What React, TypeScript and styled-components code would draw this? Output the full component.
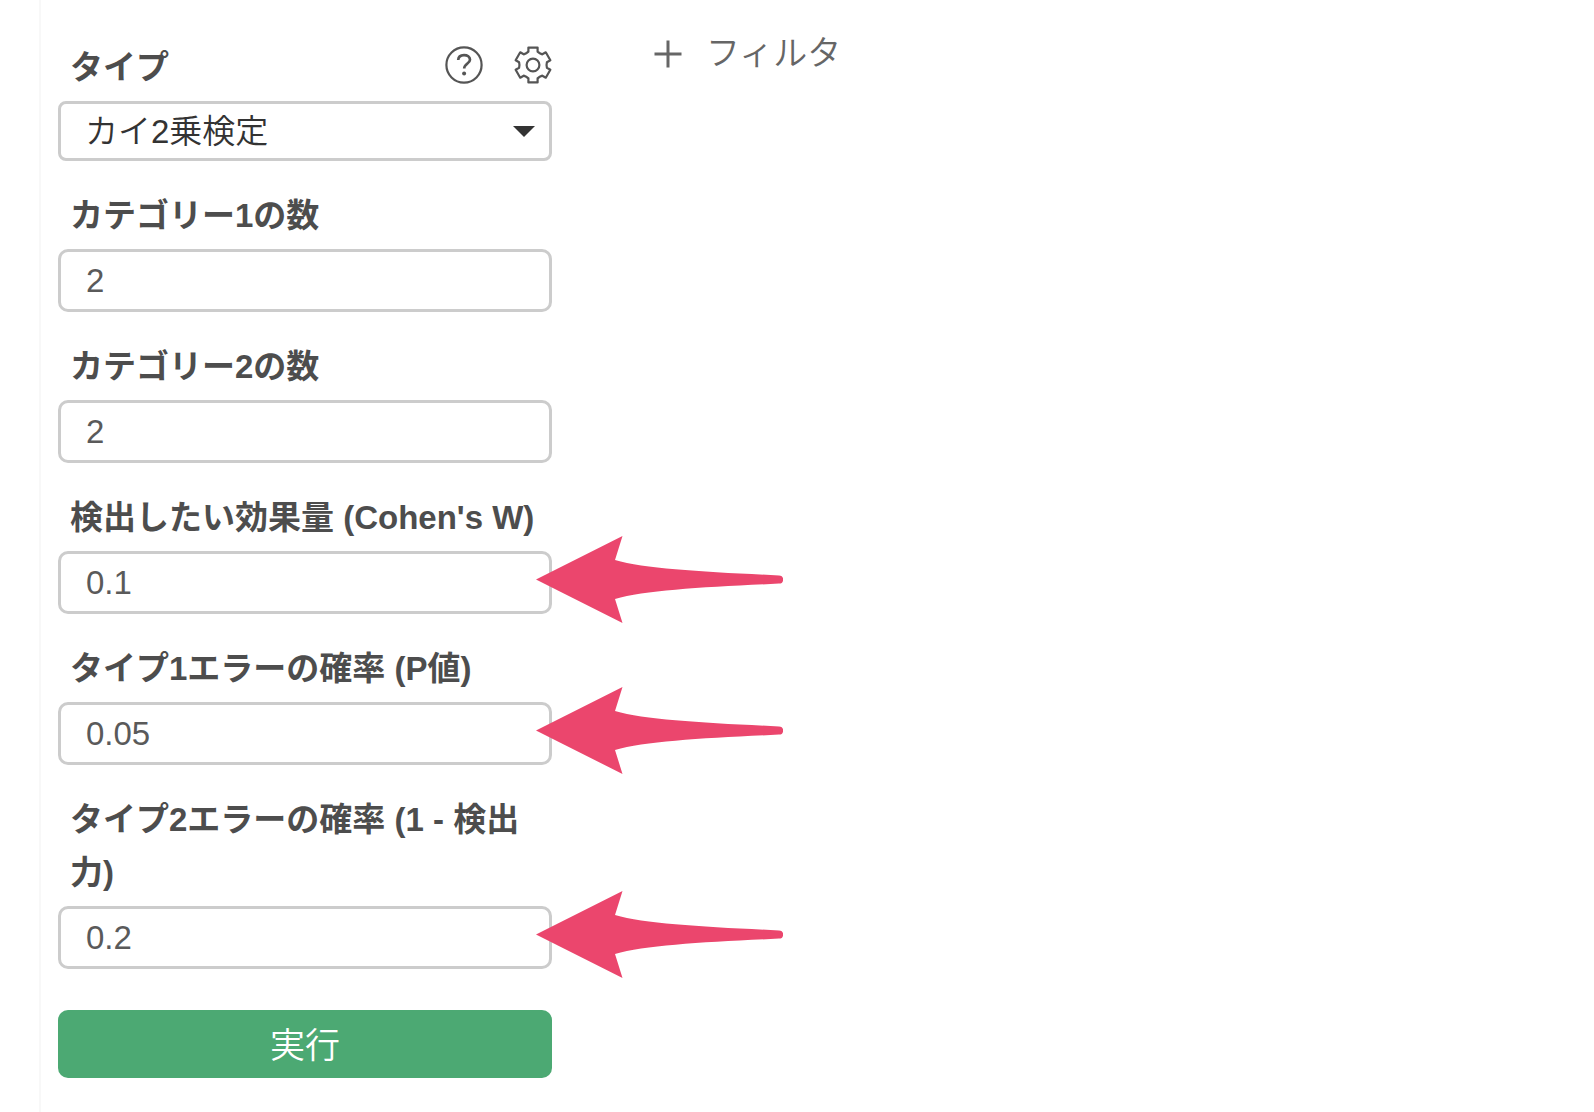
import React, { useState } from "react";
import styled, { createGlobalStyle } from "styled-components";

const GlobalStyle = createGlobalStyle`
  *, *::before, *::after { box-sizing: border-box; }
  body {
    margin: 0;
    background: #ffffff;
    color: #4d4d4d;
    font-family: "Liberation Sans", "Noto Sans CJK JP", sans-serif;
    font-size: 33px;
  }
  button, input, select { font: inherit; }
`;

const Page = styled.div`
  display: flex;
  min-height: 100vh;
  padding-left: 39px;
`;

const Sidebar = styled.aside`
  flex: 0 0 auto;
  width: 530px;
  padding: 41px 17px 32px;
  border-left: 2px solid #f8f8f8;
`;

const Content = styled.main`
  flex: 1;
  min-width: 0;
  padding: 28px 32px 28px 85px;
`;

const Form = styled.form`
  display: flex;
  flex-direction: column;
  gap: 28px;
`;

const Field = styled.div`
  display: flex;
  flex-direction: column;
  gap: 7px;
`;

const FieldHeader = styled.div`
  display: flex;
  align-items: center;
  justify-content: space-between;
`;

const Label = styled.label`
  padding: 0 12px;
  font-weight: 700;
  line-height: 53px;
`;

const Tools = styled.div`
  display: flex;
  gap: 31px;
  padding-bottom: 6px;
`;

const IconButton = styled.button`
  display: flex;
  padding: 0;
  border: 0;
  background: none;
  color: #555555;
  cursor: pointer;
`;

const Control = styled.div`
  position: relative;
`;

const Select = styled.select`
  display: block;
  width: 100%;
  height: 60px;
  padding: 0 48px 0 24px;
  border: 3px solid #cccccc;
  border-radius: 8px;
  background: #ffffff;
  color: #333333;
  font-weight: 350;
  appearance: none;
`;

const Caret = styled.svg`
  position: absolute;
  top: 25px;
  right: 17px;
  pointer-events: none;
`;

const Input = styled.input`
  display: block;
  width: 100%;
  height: 63px;
  padding: 0 25px;
  border: 3px solid #cccccc;
  border-radius: 10px;
  background: #ffffff;
  color: #5a5a5a;
`;

const Pointer = styled.svg`
  position: absolute;
  top: -15px;
  left: calc(100% - 16px);
  pointer-events: none;
`;

const RunButton = styled.button`
  height: 68px;
  margin-top: 13px;
  padding: 0 0 4px;
  border: 0;
  border-radius: 10px;
  background: #4ca973;
  color: #ffffff;
  font-size: 35px;
  font-weight: 350;
  cursor: pointer;
`;

const FilterButton = styled.button`
  display: flex;
  align-items: center;
  gap: 24px;
  padding: 0;
  border: 0;
  background: none;
  color: #666666;
  font-size: 34px;
  font-weight: 350;
  line-height: 51px;
  cursor: pointer;
`;

function HelpIcon() {
  return (
    <svg width="38" height="38" viewBox="-19 -19 38 38" fill="none" stroke="currentColor" aria-hidden="true">
      <circle r="17.6" strokeWidth="2.2" />
      <path d="M-5.8 -5C-5.6 -8.4 -3.2 -9.9 0 -9.9C3.4 -9.9 6 -8.2 6 -5.2C6 -1.6 0.2 -1.2 0.2 3.6" strokeWidth="2.7" />
      <circle cx="0.1" cy="8.6" r="2" fill="currentColor" stroke="none" />
    </svg>
  );
}

const toothOutline = [[-4.6, -13.4], [-4.6, -17.4], [4.6, -17.4], [4.6, -13.4]];

const rotate = ([x, y]: number[], deg: number) => {
  const a = (deg * Math.PI) / 180;
  const px = x * Math.cos(a) - y * Math.sin(a);
  const py = x * Math.sin(a) + y * Math.cos(a);
  return `${px.toFixed(2)} ${py.toFixed(2)}`;
};

// Each tooth is followed by a shallow curve into the valley before the next one.
const gearPath =
  "M" +
  [0, 60, 120, 180, 240, 300]
    .map((deg) => {
      const tooth = toothOutline.map((point) => rotate(point, deg)).join("L");
      return `${tooth}Q${rotate([6.6, -11.4], deg)} `;
    })
    .map((part, i, parts) => part + parts[(i + 1) % parts.length].split("L")[0])
    .join("L") +
  "Z";

function GearIcon() {
  return (
    <svg width="38" height="38" viewBox="-19 -19 38 38" fill="none" stroke="currentColor" strokeWidth="2.2" strokeLinejoin="round" aria-hidden="true">
      <path d={gearPath} />
      <circle r="6.4" />
    </svg>
  );
}

function PlusIcon() {
  return (
    <svg width="28" height="28" viewBox="0 0 28 28" stroke="currentColor" strokeWidth="3" aria-hidden="true">
      <path d="M0.5 14H27.5M14 0.5V27.5" />
    </svg>
  );
}

function PointerArrow() {
  return (
    <Pointer width="247" height="87" viewBox="0 0 247 87" fill="#eb466d" aria-hidden="true">
      <path d="M0 43.5L86.5 0L79 24C110 33 170 36 243 39.4A4.1 4.1 0 0 1 243 47.6C170 51 110 54 79 63L86.5 87Z" />
    </Pointer>
  );
}

type NumberField = { id: string; label: string; initial: string; marked?: boolean };

const numberFields: NumberField[] = [
  { id: "category1", label: "カテゴリー1の数", initial: "2" },
  { id: "category2", label: "カテゴリー2の数", initial: "2" },
  { id: "effect", label: "検出したい効果量 (Cohen's W)", initial: "0.1", marked: true },
  { id: "alpha", label: "タイプ1エラーの確率 (P値)", initial: "0.05", marked: true },
  { id: "beta", label: "タイプ2エラーの確率 (1 - 検出力)", initial: "0.2", marked: true },
];

function NumberInput({ id, label, initial, marked }: NumberField) {
  const [value, setValue] = useState(initial);
  return (
    <Field>
      <Label htmlFor={id}>{label}</Label>
      <Control>
        <Input id={id} type="text" inputMode="decimal" value={value} onChange={(e) => setValue(e.target.value)} />
        {marked && <PointerArrow />}
      </Control>
    </Field>
  );
}

export default function App() {
  return (
    <Page lang="ja">
      <GlobalStyle />
      <Sidebar>
        <Form onSubmit={(e) => e.preventDefault()}>
          <Field>
            <FieldHeader>
              <Label htmlFor="test-type">タイプ</Label>
              <Tools>
                <IconButton type="button" aria-label="ヘルプ">
                  <HelpIcon />
                </IconButton>
                <IconButton type="button" aria-label="設定">
                  <GearIcon />
                </IconButton>
              </Tools>
            </FieldHeader>
            <Control>
              <Select id="test-type" defaultValue="chi">
                <option value="chi">カイ2乗検定</option>
              </Select>
              <Caret width="22" height="11" viewBox="0 0 22 11" fill="#333333" aria-hidden="true">
                <path d="M0 0H22L11 11Z" />
              </Caret>
            </Control>
          </Field>
          {numberFields.map((field) => (
            <NumberInput key={field.id} {...field} />
          ))}
          <RunButton type="submit">実行</RunButton>
        </Form>
      </Sidebar>
      <Content>
        <FilterButton type="button">
          <PlusIcon />
          フィルタ
        </FilterButton>
      </Content>
    </Page>
  );
}
